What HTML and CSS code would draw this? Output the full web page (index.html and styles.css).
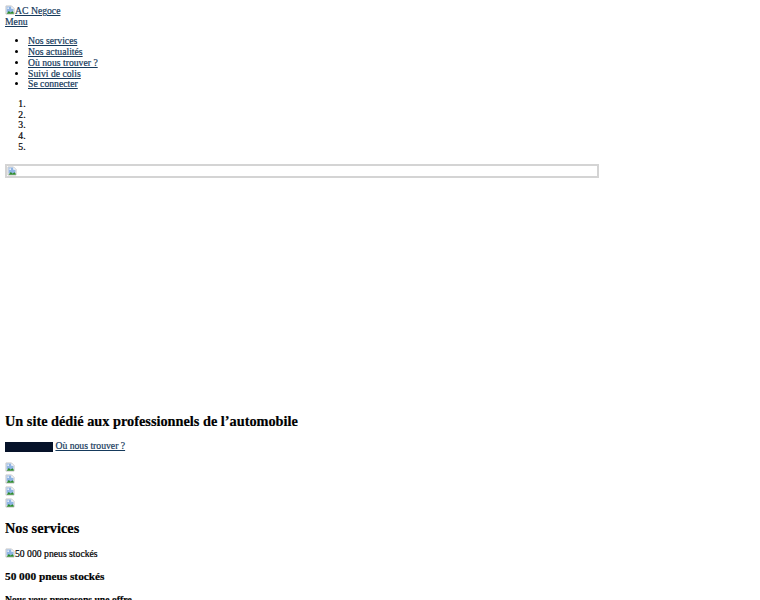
FILE: index.html
```html
<!DOCTYPE html>
<html lang="fr">
<head>
    <meta charset="UTF-8">
    <meta name="viewport" content="width=device-width, initial-scale=1.0">
    <title>AC Negoce</title>
    <link rel="stylesheet" href="styles.css">
</head>
<body>

    <!-- Header -->
    <header class="site-header">
        <a href="#" class="logo"><svg class="broken-img" viewBox="0 0 16 16"><path d="M1.5 1.5h9l4 4v9h-13z" fill="#fff" stroke="#a8a8a8"/><path d="M2.5 2.5h7.5v3.5h3.5v6h-11z" fill="#8fb4e3"/><path d="M2.5 14 L6 9.5 L9 12 L12 10 L14 12.5 V14 Z" fill="#2e8b2e"/><circle cx="5" cy="5" r="1.3" fill="#fff"/></svg>AC Negoce</a>
        <a href="#" class="menu-link">Menu</a>
        <ul class="main-nav">
            <li><a href="#">Nos services</a></li>
            <li><a href="#">Nos actualités</a></li>
            <li><a href="#">Où nous trouver ?</a></li>
            <li><a href="#">Suivi de colis</a></li>
            <li><a href="#">Se connecter</a></li>
        </ul>
    </header>

    <!-- Slider -->
    <ol class="slider-dots">
        <li></li>
        <li></li>
        <li></li>
        <li></li>
        <li></li>
    </ol>
    <div class="slider">
        <div class="slide-frame"><svg class="broken-img" viewBox="0 0 16 16"><path d="M1.5 1.5h9l4 4v9h-13z" fill="#fff" stroke="#a8a8a8"/><path d="M2.5 2.5h7.5v3.5h3.5v6h-11z" fill="#8fb4e3"/><path d="M2.5 14 L6 9.5 L9 12 L12 10 L14 12.5 V14 Z" fill="#2e8b2e"/><circle cx="5" cy="5" r="1.3" fill="#fff"/></svg></div>
    </div>

    <!-- Intro -->
    <section class="intro">
        <h2>Un site dédié aux professionnels de l’automobile</h2>
        <div class="intro-links">
            <a href="#" class="btn-dark">Nos services</a> <a href="#">Où nous trouver ?</a>
        </div>
        <div class="brands">
            <div><svg class="broken-img" viewBox="0 0 16 16"><path d="M1.5 1.5h9l4 4v9h-13z" fill="#fff" stroke="#a8a8a8"/><path d="M2.5 2.5h7.5v3.5h3.5v6h-11z" fill="#8fb4e3"/><path d="M2.5 14 L6 9.5 L9 12 L12 10 L14 12.5 V14 Z" fill="#2e8b2e"/><circle cx="5" cy="5" r="1.3" fill="#fff"/></svg></div>
            <div><svg class="broken-img" viewBox="0 0 16 16"><path d="M1.5 1.5h9l4 4v9h-13z" fill="#fff" stroke="#a8a8a8"/><path d="M2.5 2.5h7.5v3.5h3.5v6h-11z" fill="#8fb4e3"/><path d="M2.5 14 L6 9.5 L9 12 L12 10 L14 12.5 V14 Z" fill="#2e8b2e"/><circle cx="5" cy="5" r="1.3" fill="#fff"/></svg></div>
            <div><svg class="broken-img" viewBox="0 0 16 16"><path d="M1.5 1.5h9l4 4v9h-13z" fill="#fff" stroke="#a8a8a8"/><path d="M2.5 2.5h7.5v3.5h3.5v6h-11z" fill="#8fb4e3"/><path d="M2.5 14 L6 9.5 L9 12 L12 10 L14 12.5 V14 Z" fill="#2e8b2e"/><circle cx="5" cy="5" r="1.3" fill="#fff"/></svg></div>
            <div><svg class="broken-img" viewBox="0 0 16 16"><path d="M1.5 1.5h9l4 4v9h-13z" fill="#fff" stroke="#a8a8a8"/><path d="M2.5 2.5h7.5v3.5h3.5v6h-11z" fill="#8fb4e3"/><path d="M2.5 14 L6 9.5 L9 12 L12 10 L14 12.5 V14 Z" fill="#2e8b2e"/><circle cx="5" cy="5" r="1.3" fill="#fff"/></svg></div>
        </div>
    </section>

    <!-- Services -->
    <section class="services">
        <h2>Nos services</h2>
        <div class="service-img"><svg class="broken-img" viewBox="0 0 16 16"><path d="M1.5 1.5h9l4 4v9h-13z" fill="#fff" stroke="#a8a8a8"/><path d="M2.5 2.5h7.5v3.5h3.5v6h-11z" fill="#8fb4e3"/><path d="M2.5 14 L6 9.5 L9 12 L12 10 L14 12.5 V14 Z" fill="#2e8b2e"/><circle cx="5" cy="5" r="1.3" fill="#fff"/></svg>50 000 pneus stockés</div>
        <h3>50 000 pneus stockés</h3>
        <p class="service-text">Nous vous proposons une offre</p>
    </section>

</body>
</html>
```

FILE: styles.css
```css
/* Global */
body {
    margin: 5px;
    font-family: "Liberation Serif", "Times New Roman", serif;
    font-size: 9.7px;
    line-height: 10.7px;
    color: #000;
    background: #fff;
    -webkit-text-stroke: 0.2px;
}

a {
    color: #163a5c;
}

.broken-img {
    width: 10px;
    height: 10px;
    vertical-align: -1px;
}

/* Header */
.site-header a {
    display: block;
}

.main-nav {
    margin: 9px 0;
    padding-left: 23px;
}

.main-nav a {
    display: inline;
}

/* Slider */
.slider-dots {
    margin: 9px 0;
    padding-left: 23px;
}

.slider-dots li {
    height: 10.7px;
}

.slider {
    height: 238px;
    padding-top: 3px;
}

.slide-frame {
    width: 590px;
    height: 10px;
    border: 2px solid #d4d4d4;
    line-height: 10px;
}

/* Intro */
h2 {
    font-size: 14.3px;
    line-height: 16px;
    margin: 11px 0;
}

.intro-links {
    margin-top: 12px;
    margin-bottom: 10px;
}

.btn-dark {
    display: inline-block;
    box-sizing: border-box;
    background: #061229;
    color: #061229;
    width: 48px;
    height: 10px;
    padding-left: 2px;
    font-size: 8.5px;
    line-height: 10px;
    text-decoration: none;
    vertical-align: -1px;
    -webkit-text-stroke: 0;
}

.brands div {
    height: 12px;
}

/* Services */
.services h2 {
    margin-top: 10px;
    margin-bottom: 12px;
}

.service-img {
    margin-bottom: 9px;
}

h3 {
    font-size: 11.3px;
    line-height: 13px;
    margin: 10px 0;
}

.service-text {
    font-weight: bold;
    margin: 12px 0;
}
```
